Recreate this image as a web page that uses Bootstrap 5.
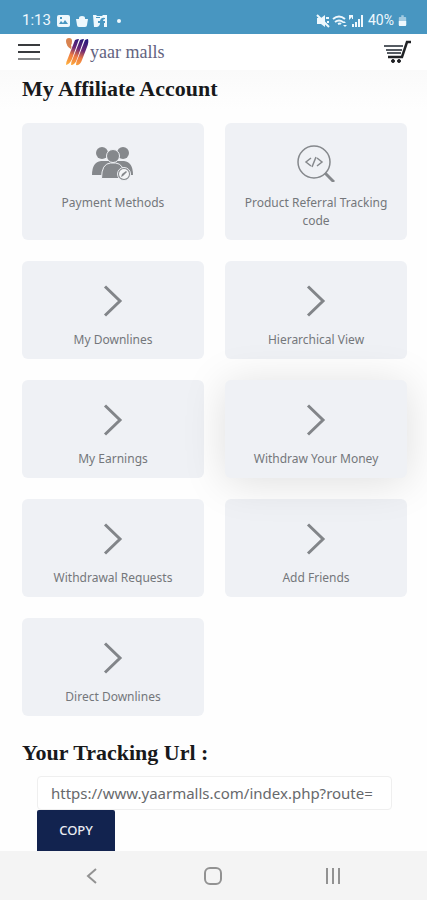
<!DOCTYPE html>
<html lang="en">
<head>
<meta charset="utf-8">
<meta name="viewport" content="width=device-width, initial-scale=1">
<title>My Affiliate Account</title>
<link rel="stylesheet" href="https://cdn.jsdelivr.net/npm/bootstrap@5.3.0/dist/css/bootstrap.min.css">
<style>
body{font-family:"Noto Sans","Open Sans",sans-serif;color:#74777b;background:#fefefe;overflow-x:hidden}
svg{display:block;flex:none}
.status-bar{height:34px;padding:10px 20px 0 22px;background:#4896c1;color:#eff8fd;font:400 15px/20px Roboto,sans-serif}
.status-bar svg{margin-top:4px}
.battery-level{font-size:14px}
.site-header{height:36px;padding:0 15px 0 18px;background:#fff}
.brand{margin-left:25px;font:20px/30px "Liberation Serif",serif;color:#63647f;text-decoration:none}
.brand-name{margin-left:1px;font-size:18px}
.account{padding:0 20px 0 22px;background:linear-gradient(#fafafa,#fefefe 40px)}
.section-title{font:bold 22px/28px "Liberation Serif",serif;color:#18191b;margin:0}
.title-top{padding-top:5px;margin-bottom:20px}
.title-url{margin-top:23px;margin-bottom:9px}
.tiles{display:grid;grid-template-columns:1fr 1fr;gap:21px}
.tile{padding:22px 12px 10px;border-radius:6px;background:#eff1f5;color:#74777b;font-size:12px;line-height:18px;text-decoration:none;text-align:center}
.tile svg{margin:0 auto 12px}
.tile-raised{position:relative;box-shadow:0 4px 44px rgba(0,0,0,.13)}
.url-form{padding:0 15px}
.url-field{height:34px;padding:0 13px;border:1px solid #efefef;border-radius:4px;background:#fff;color:#67696c;font-size:15px}
.copy-btn{height:41px;width:78px;border:0;border-radius:2px 2px 0 0;background:#12234f;color:#e9ecf3;font-size:13px;font-weight:500}
.copy-btn:hover{background:#12234f;color:#fff}
.system-nav{height:49px;padding:0 84px 0 82px;background:#f4f4f4;position:relative}
</style>
<script src="https://cdn.jsdelivr.net/npm/bootstrap@5.3.0/dist/js/bootstrap.bundle.min.js"></script>
</head>
<body class="d-flex flex-column min-vh-100">
<svg width="0" height="0" class="d-none" aria-hidden="true">
  <symbol id="chevron" viewBox="0 0 36 36"><path d="M10 3.500 25 18 10 32.500" fill="none" stroke="#828589" stroke-width="3"/></symbol>
</svg>
<div class="status-bar d-flex align-items-start">
  <span>1:13</span>
  <svg class="ms-1" width="66" height="14" viewBox="0 0 66 14" fill="#eff8fd">
    <path fill-rule="evenodd" d="M4 1h9a2 2 0 0 1 2 2v8a2 2 0 0 1-2 2H4a2 2 0 0 1-2-2V3a2 2 0 0 1 2-2zm0 9h9L10 6 8 9 6 7zM5 3v2h2V3z"/>
    <path d="M21 5h12l-1 6a2 2 0 0 1-2 2h-6a2 2 0 0 1-2-2z"/><path d="M24 6V4q0-2 3-2t3 2v2z"/>
    <path fill-rule="evenodd" d="M38 1h3l1 1h5l1-1h4v12h-3V9h1V7h-2q0-2 2-2V4q-4-1-5 3h-2v2h2q0 3-3 4h-3zM41 3v1h4V3z"/>
    <circle cx="64" cy="7" r="2"/>
  </svg>
  <svg class="ms-auto" width="52" height="14" viewBox="0 0 52 14" fill="#eff8fd">
    <path d="M1 4h4l4-3v12L5 10H1z"/><path d="m1 1 12 12M10 4h3M11 8h2" fill="none" stroke="#eff8fd" stroke-width="2"/>
    <path d="M17 5q6-5 12 0M19 8q4-3 8 0M22 10q2-1 3 0" fill="none" stroke="#eff8fd" stroke-width="2"/><path d="m26 9 2-2 2 2zM27 11h4l-2 2z"/>
    <path d="M33 1h4v4h-1V3l-3 3zM36 10h2v3h-2zM39 8h2v5h-2zM42 5h2v8h-2zM45 1h2v12h-2z"/>
  </svg>
  <span class="battery-level">40%</span>
  <svg class="ms-1" width="9" height="14" viewBox="0 0 11 14" fill="#eff8fd"><path d="M4 0h3v2h2q1 0 1 1v9q0 1-1 1H2q-1 0-1-1V3q0-1 1-1h2z" opacity=".55"/><path d="M1 7h9v5q0 1-1 1H2q-1 0-1-1z"/></svg>
</div>
<header class="site-header d-flex align-items-center">
  <button type="button" class="btn p-0 border-0" aria-label="Menu"><svg width="22" height="18" viewBox="0 0 22 18"><path d="M0 2h22M0 9h22" stroke="#393b3e" stroke-width="2"/><path d="M0 16h22" stroke="#858789" stroke-width="2"/></svg></button>
  <a href="#" class="brand d-flex align-items-center">
    <svg width="24" height="30" viewBox="0 0 24 30"><defs><linearGradient id="flame" gradientUnits="userSpaceOnUse" x1="6" y1="29" x2="17" y2="1"><stop offset="0" stop-color="#ffb03c"/><stop offset=".35" stop-color="#ed7a43"/><stop offset=".62" stop-color="#6b2877"/><stop offset="1" stop-color="#24177b"/></linearGradient></defs>
      <path d="M1 4Q1 1 4 1t3 3q0 3-1 4 1 2 0 4-5-3-5-8z" fill="#d98350"/><path d="M10 3q2-1 4-1L7 22q-2 5-6 6 0-3 2-7z" fill="url(#flame)"/><path d="M15 3q2-1 4-1l-7 20q-2 6-6 6 0-3 2-7z" fill="url(#flame)"/><path d="M20 3q2-1 3-1 1 3-1 8l-5 13q-2 6-6 5 0-3 2-7z" fill="url(#flame)"/></svg>
    <span class="brand-name">yaar malls</span>
  </a>
  <a href="#" class="ms-auto" aria-label="Cart"><svg width="30" height="24" viewBox="0 0 30 24" fill="none" stroke="#202225"><path d="M29 2h-4l-5 15H6" stroke-width="2.500"/><path d="M2 6h19M4 10h16M5 13h14" stroke="#555b62" stroke-width="2"/><circle cx="11" cy="21" r="1.500" fill="#202225"/><circle cx="17" cy="21" r="1.500" fill="#202225"/></svg></a>
</header>
<main class="account flex-grow-1">
  <h1 class="section-title title-top">My Affiliate Account</h1>
  <div class="tiles">
    <a href="#" class="tile"><svg width="42" height="37" viewBox="0 0 42 37" fill="#85888c"><circle cx="10" cy="8" r="6"/><circle cx="31" cy="8" r="6"/><path d="M0 30q0-13 9-14h23q9 1 9 14z"/><g stroke="#eff1f5"><circle cx="21" cy="11" r="6.500"/><path d="M9.500 33.500q0-15 9-15.500h5q9 .5 9 15.500z"/><circle cx="32" cy="29" r="6.500" fill="#85888c"/></g><circle cx="32" cy="29" r="5" fill="#f4f5f7"/><path d="m29 32 1-3 4-3 1 1-4 4z"/></svg>Payment Methods</a>
    <a href="#" class="tile"><svg width="38" height="37" viewBox="0 0 38 37" fill="none" stroke="#85888c"><circle cx="17" cy="17" r="16" stroke-width="1.500"/><path d="m28 28 9 9" stroke-width="3"/><path d="m14 13-5 4 5 4m6-8 5 4-5 4m-1-9-4 10" stroke-width="1.500"/></svg>Product Referral Tracking code</a>
    <a href="#" class="tile"><svg width="36" height="36"><use href="#chevron"/></svg>My Downlines</a>
    <a href="#" class="tile"><svg width="36" height="36"><use href="#chevron"/></svg>Hierarchical View</a>
    <a href="#" class="tile"><svg width="36" height="36"><use href="#chevron"/></svg>My Earnings</a>
    <a href="#" class="tile tile-raised"><svg width="36" height="36"><use href="#chevron"/></svg>Withdraw Your Money</a>
    <a href="#" class="tile"><svg width="36" height="36"><use href="#chevron"/></svg>Withdrawal Requests</a>
    <a href="#" class="tile"><svg width="36" height="36"><use href="#chevron"/></svg>Add Friends</a>
    <a href="#" class="tile"><svg width="36" height="36"><use href="#chevron"/></svg>Direct Downlines</a>
  </div>
  <h2 class="section-title title-url"><label for="tracking-url">Your Tracking Url :</label></h2>
  <form class="url-form">
    <input id="tracking-url" class="url-field d-block w-100" type="text" value="https://www.yaarmalls.com/index.php?route=" readonly>
    <button type="button" class="btn copy-btn d-block p-0">COPY</button>
  </form>
</main>
<nav class="system-nav d-flex align-items-center justify-content-between" aria-label="System">
  <button type="button" class="btn p-0 border-0" aria-label="Back"><svg width="20" height="20" viewBox="0 0 20 20" fill="none" stroke="#929292" stroke-width="2"><path d="m14 3-8 7 8 7"/></svg></button>
  <button type="button" class="btn p-0 border-0" aria-label="Home"><svg width="20" height="20" viewBox="0 0 20 20" fill="none" stroke="#929292" stroke-width="2"><rect x="2" y="2" width="16" height="16" rx="5"/></svg></button>
  <button type="button" class="btn p-0 border-0" aria-label="Recent apps"><svg width="20" height="20" viewBox="0 0 20 20" stroke="#929292" stroke-width="2"><path d="M4 2v16M10 2v16M16 2v16"/></svg></button>
</nav>
</body>
</html>
